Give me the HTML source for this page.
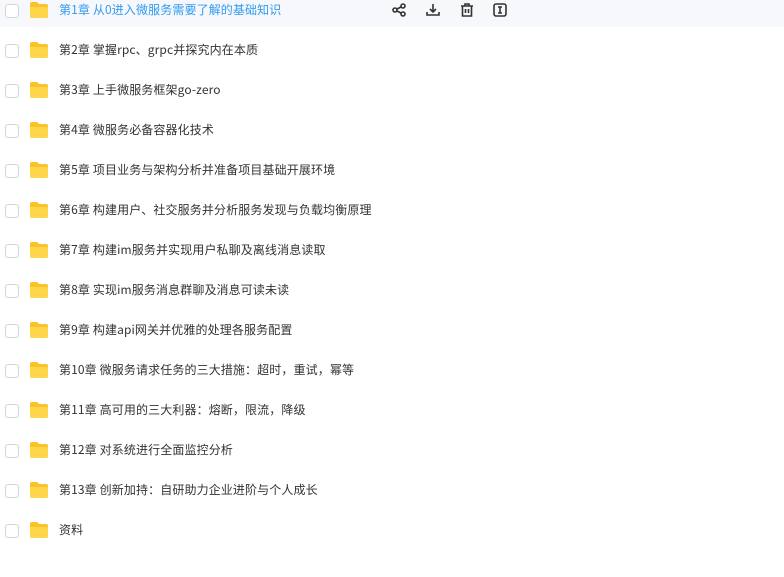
<!DOCTYPE html><html><head><meta charset="utf-8"><style>
body{margin:0;width:784px;height:577px;background:#fff;font-family:"Noto Sans CJK SC",sans-serif;overflow:hidden;position:relative}
.r{position:absolute;left:0;width:784px;height:40px}
.r.h{background:#f7f8fc}
.cb{position:absolute;left:5px;top:13px;width:12px;height:12px;border:1px solid #d3d5db;border-radius:3px;background:#fff}
.fd{position:absolute;left:29px;top:10px;width:20px;height:18px}
.t{position:absolute;left:59px;top:11px;font-size:12px;letter-spacing:0.12px;color:#333;line-height:16px;white-space:nowrap}
.h .t{color:#2f9bf0}
.ic{position:absolute;top:12px}
</style></head><body>
<div class="r h" style="top:-9px;height:36px"><div class="cb"></div>
<svg class="fd" viewBox="0 0 20 18"><path d="M1 3a2 2 0 0 1 2-2h5l2 2h7a2 2 0 0 1 2 2v10a2 2 0 0 1-2 2H3a2 2 0 0 1-2-2z" fill="#fcc22c"/><path d="M1 6h18v9a2 2 0 0 1-2 2H3a2 2 0 0 1-2-2z" fill="#ffd54a"/></svg>
<div class="t">第1章 从0进入微服务需要了解的基础知识</div>
<svg class="ic" style="left:392px" width="14" height="14" viewBox="0 0 14 14" fill="none" stroke="#333" stroke-width="1.6"><circle cx="3" cy="7" r="2"/><circle cx="11" cy="3" r="2"/><circle cx="11" cy="11" r="2"/><path d="M5 6l4-2M5 8l4 2"/></svg>
<svg class="ic" style="left:426px" width="14" height="14" viewBox="0 0 14 14" fill="none" stroke="#333" stroke-width="1.6"><path d="M7 1v8M4 6l3 3 3-3M1 9v3h12V9"/></svg>
<svg class="ic" style="left:460px" width="14" height="14" viewBox="0 0 14 14" fill="none" stroke="#333" stroke-width="1.6"><path d="M1 3h12M5 3V1h4v2M2.5 3v10h9V3M5.5 6v4M8.5 6v4"/></svg>
<svg class="ic" style="left:493px" width="14" height="14" viewBox="0 0 14 14" fill="none" stroke="#333" stroke-width="1.6"><rect x="1" y="1" width="12" height="12" rx="2"/><path d="M5 4h4M5 10h4M7 4v6"/></svg>
</div>
<div id="list"></div>
<script>
var L=["第2章 掌握rpc、grpc并探究内在本质","第3章 上手微服务框架go-zero","第4章 微服务必备容器化技术","第5章 项目业务与架构分析并准备项目基础开展环境","第6章 构建用户、社交服务并分析服务发现与负载均衡原理","第7章 构建im服务并实现用户私聊及离线消息读取","第8章 实现im服务消息群聊及消息可读未读","第9章 构建api网关并优雅的处理各服务配置","第10章 微服务请求任务的三大措施：超时，重试，幂等","第11章 高可用的三大利器：熔断，限流，降级","第12章 对系统进行全面监控分析","第13章 创新加持：自研助力企业进阶与个人成长","资料"];
var h="";L.forEach(function(t,i){h+='<div class="r" style="top:'+(31+40*i)+'px"><div class="cb"></div><svg class="fd" viewBox="0 0 20 18"><path d="M1 3a2 2 0 0 1 2-2h5l2 2h7a2 2 0 0 1 2 2v10a2 2 0 0 1-2 2H3a2 2 0 0 1-2-2z" fill="#fcc22c"/><path d="M1 6h18v9a2 2 0 0 1-2 2H3a2 2 0 0 1-2-2z" fill="#ffd54a"/></svg><div class="t">'+t+'</div></div>'});
document.getElementById("list").innerHTML=h;
</script>
</body></html>
